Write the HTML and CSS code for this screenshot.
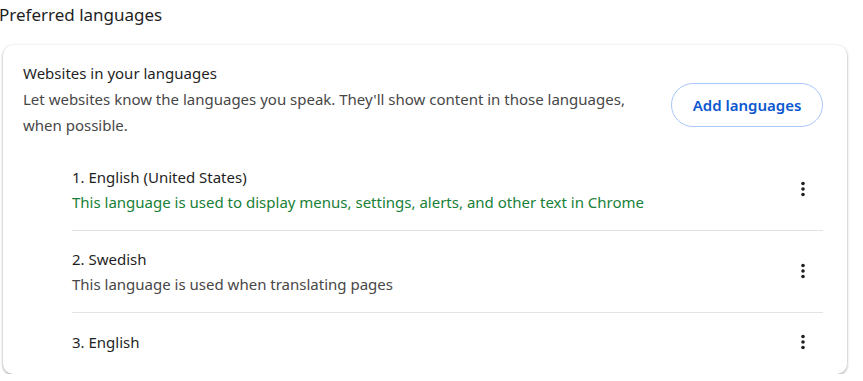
FILE: index.html
```html
<!DOCTYPE html>
<html lang="en">
<head>
    <title>Languages</title>
    <link rel="stylesheet" href="styles.css">
    <meta name="viewport" content="width=device-width, initial-scale=1.0" charset="utf-8">
</head>
<body>
    <h2 class="page-title">Preferred languages</h2>

    <div class="card">
        <!-- Header row with add button -->
        <div class="card-header">
            <div class="header-text">
                <div class="label">Websites in your languages</div>
                <div class="sub-label">Let websites know the languages you speak. They'll show content in those languages, when possible.</div>
            </div>
            <button class="add-button">Add languages</button>
        </div>

        <!-- Language list -->
        <div class="lang-list">
            <div class="lang-row">
                <div class="lang-text">
                    <div class="label">1. English (United States)</div>
                    <div class="sub-label green">This language is used to display menus, settings, alerts, and other text in Chrome</div>
                </div>
                <button class="more-button" aria-label="More actions">
                    <svg width="20" height="20" viewBox="0 0 20 20"><circle cx="10" cy="4.5" r="1.8"/><circle cx="10" cy="10" r="1.8"/><circle cx="10" cy="15.5" r="1.8"/></svg>
                </button>
            </div>
            <div class="lang-row">
                <div class="lang-text">
                    <div class="label">2. Swedish</div>
                    <div class="sub-label">This language is used when translating pages</div>
                </div>
                <button class="more-button" aria-label="More actions">
                    <svg width="20" height="20" viewBox="0 0 20 20"><circle cx="10" cy="4.5" r="1.8"/><circle cx="10" cy="10" r="1.8"/><circle cx="10" cy="15.5" r="1.8"/></svg>
                </button>
            </div>
            <div class="lang-row single">
                <div class="lang-text">
                    <div class="label">3. English</div>
                </div>
                <button class="more-button" aria-label="More actions">
                    <svg width="20" height="20" viewBox="0 0 20 20"><circle cx="10" cy="4.5" r="1.8"/><circle cx="10" cy="10" r="1.8"/><circle cx="10" cy="15.5" r="1.8"/></svg>
                </button>
            </div>
        </div>
    </div>
</body>
</html>
```

FILE: styles.css
```css
body {
    font-family: "Noto Sans", "Open Sans", sans-serif;
    font-size: 15px;
    margin: 0;
    padding: 0 16px 0 3px;
    background-color: #fff;
    color: #1f1f1f;
}
.page-title {
    font-size: 17px;
    font-weight: 400;
    margin: 0 0 0 -4px;
    padding: 2px 0 0 0;
    height: 43px;
    line-height: 26px;
}
.card {
    background-color: #fff;
    border-radius: 10px;
    box-shadow: 0px 1px 3px rgba(0, 0, 0, 0.3), 0px 1px 2px rgba(0, 0, 0, 0.12);
    padding: 0 24px 0 20px;
}
.card-header {
    display: flex;
    align-items: center;
    padding: 15px 0 11px 0;
}
.header-text {
    flex: 1;
    padding-right: 24px;
}
.label {
    line-height: 26px;
}
.sub-label {
    color: #474747;
    line-height: 26px;
}
.lang-text .sub-label {
    line-height: 24px;
}
.green {
    color: #188038;
}
.add-button {
    font-family: inherit;
    font-size: 15px;
    font-weight: 600;
    color: #0b57d0;
    background-color: #fff;
    border: 1px solid #a8c7fa;
    border-radius: 22px;
    height: 44px;
    width: 152px;
    margin-top: 12px;
    cursor: pointer;
}
.lang-list {
    margin-left: 49px;
}
.lang-row {
    display: flex;
    align-items: center;
    min-height: 82px;
    padding-bottom: 1px;
    box-sizing: border-box;
    border-bottom: 1px solid #e3e3e3;
}
.lang-row.single {
    border-bottom: none;
    min-height: 61px;
    padding-bottom: 4px;
}
.lang-text {
    flex: 1;
}
.more-button {
    background: none;
    border: none;
    padding: 0;
    width: 20px;
    height: 20px;
    margin-right: 10px;
    cursor: pointer;
    fill: #1f1f1f;
}
```
